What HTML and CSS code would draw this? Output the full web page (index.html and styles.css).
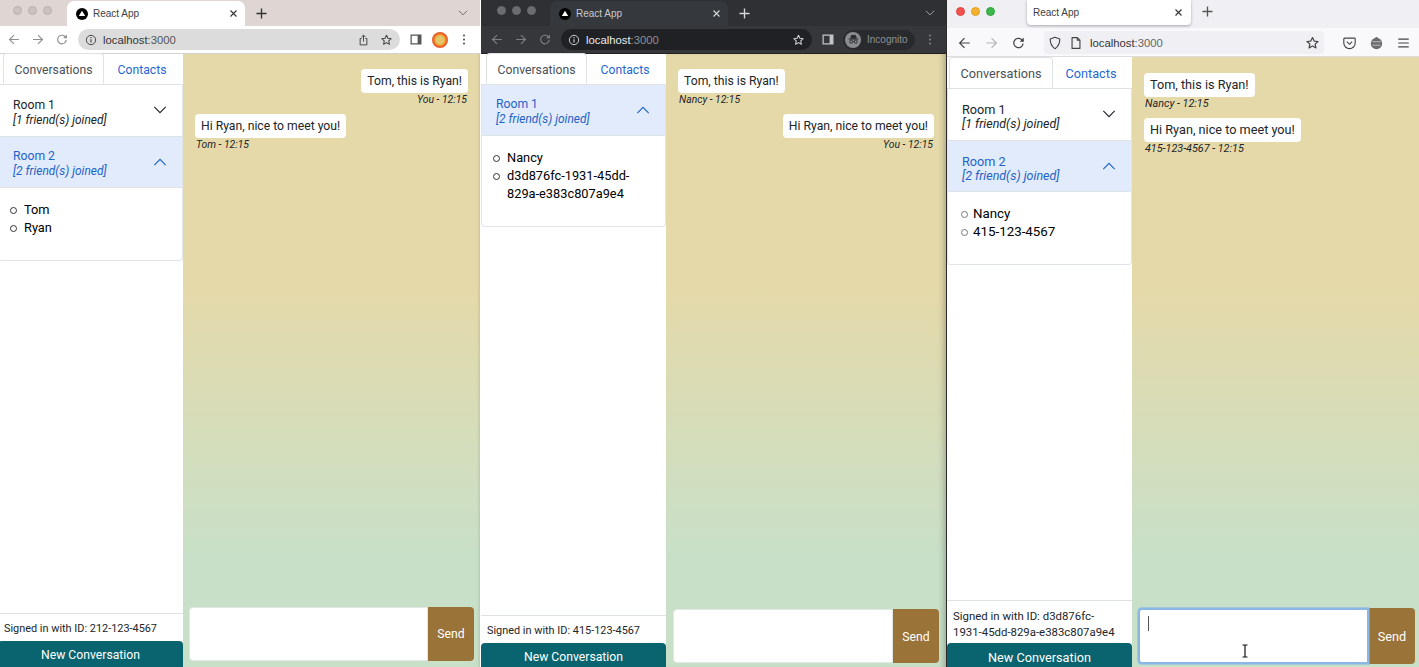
FILE: index.html
```html
<!DOCTYPE html>
<html lang="en">
<head>
<meta charset="UTF-8">
<title>React App - three browsers</title>
<link rel="stylesheet" href="styles.css">
</head>
<body>
<svg class="sprite" aria-hidden="true">
  <symbol id="i-back" viewBox="0 0 16 16"><path d="M14 8H2.500M8 2.500 2.500 8 8 13.500" fill="none" stroke="currentColor" stroke-width="1.400"/></symbol>
  <symbol id="i-forward" viewBox="0 0 16 16"><path d="M2 8h11.500M8 2.500 13.500 8 8 13.500" fill="none" stroke="currentColor" stroke-width="1.400"/></symbol>
  <symbol id="i-reload" viewBox="0 0 16 16"><path d="M13.200 8.500A5.300 5.300 0 1 1 11.600 4.200L13.500 6" fill="none" stroke="currentColor" stroke-width="1.400"/><path d="M14 1.800V6.500H9.300z" fill="currentColor"/></symbol>
  <symbol id="i-info" viewBox="0 0 16 16"><circle cx="8" cy="8" r="6.200" fill="none" stroke="currentColor" stroke-width="1.300"/><path d="M8 7v4.400" stroke="currentColor" stroke-width="1.500"/><circle cx="8" cy="4.900" r=".9" fill="currentColor"/></symbol>
  <symbol id="i-share" viewBox="0 0 16 16"><path d="M5.500 6H3.500v8.500h9V6h-2M8 10V1.800M5.300 4.200 8 1.500l2.700 2.700" fill="none" stroke="currentColor" stroke-width="1.300"/></symbol>
  <symbol id="i-star" viewBox="0 0 16 16"><path d="m8 1.800 1.900 4 4.400.5-3.300 3 .9 4.400L8 11.500l-3.900 2.200.9-4.400-3.300-3 4.400-.5z" fill="none" stroke="currentColor" stroke-width="1.400" stroke-linejoin="round"/></symbol>
  <symbol id="i-panel" viewBox="0 0 16 16"><path d="M2 2.500h12v11H2z" fill="none" stroke="currentColor" stroke-width="1.500"/><path d="M10 2.500h4v11h-4z" fill="currentColor"/></symbol>
  <symbol id="i-dots" viewBox="0 0 16 16"><circle cx="8" cy="3" r="1.300" fill="currentColor"/><circle cx="8" cy="8" r="1.300" fill="currentColor"/><circle cx="8" cy="13" r="1.300" fill="currentColor"/></symbol>
  <symbol id="i-down" viewBox="0 0 16 16"><path d="M1.500 4.500 8 11l6.500-6.500" fill="none" stroke="currentColor" stroke-width="1.300"/></symbol>
  <symbol id="i-up" viewBox="0 0 16 16"><path d="M1.500 11.500 8 5l6.500 6.500" fill="none" stroke="currentColor" stroke-width="1.300"/></symbol>
  <symbol id="i-close" viewBox="0 0 12 12"><path d="m2 2 8 8m0-8-8 8" fill="none" stroke="currentColor" stroke-width="1.500"/></symbol>
  <symbol id="i-plus" viewBox="0 0 12 12"><path d="M6 .5v11M.5 6h11" fill="none" stroke="currentColor" stroke-width="1.500"/></symbol>
  <symbol id="i-logo" viewBox="0 0 12 12"><circle cx="6" cy="6" r="6" fill="#000"/><path d="M6 2.800 9.200 8H2.800z" fill="#fff"/></symbol>
  <symbol id="i-shield" viewBox="0 0 16 16"><path d="M8 1.500 13.500 3.500c0 5-1.500 8.500-5.500 11-4-2.500-5.500-6-5.500-11z" fill="none" stroke="currentColor" stroke-width="1.300" stroke-linejoin="round"/></symbol>
  <symbol id="i-page" viewBox="0 0 16 16"><path d="M3.500 1.800h6l3 3v9.400h-9zM9.500 1.800v3h3" fill="none" stroke="currentColor" stroke-width="1.300" stroke-linejoin="round"/></symbol>
  <symbol id="i-pocket" viewBox="0 0 16 16"><path d="M2.500 2.500h11a1 1 0 0 1 1 1V8a6.500 6.500 0 0 1-13 0V3.500a1 1 0 0 1 1-1z" fill="none" stroke="currentColor" stroke-width="1.300"/><path d="M5 6.500 8 9.500l3-3" fill="none" stroke="currentColor" stroke-width="1.300"/></symbol>
  <symbol id="i-ext" viewBox="0 0 16 16"><circle cx="8" cy="8.500" r="6.500" fill="#6d6d70"/><path d="M3 6.500h10M3.500 10.500h9" stroke="#c4c4c6" stroke-width="1"/><circle cx="8" cy="2.500" r="1.500" fill="#6d6d70"/></symbol>
  <symbol id="i-menu" viewBox="0 0 16 16"><path d="M2 3.500h12M2 8h12M2 12.500h12" stroke="currentColor" stroke-width="1.300"/></symbol>
  <symbol id="i-incognito" viewBox="0 0 16 16"><path d="M2 7.500h12M4.500 7l1-4h5l1 4" fill="#2b2c2f" stroke="#2b2c2f" stroke-width="1.200"/><circle cx="5.200" cy="10.800" r="1.900" fill="none" stroke="#2b2c2f" stroke-width="1.100"/><circle cx="10.800" cy="10.800" r="1.900" fill="none" stroke="#2b2c2f" stroke-width="1.100"/><path d="M7 10.500h2" stroke="#2b2c2f"/></symbol>
  <symbol id="i-ibeam" viewBox="0 0 8 14"><path d="M1.500 1h5M1.500 13h5M4 1v12" fill="none" stroke="#111" stroke-width="1.200"/></symbol>
</svg>

<div class="desktop">

  <!-- regular chrome, Tom -->
  <section class="win win-first">
    <header class="browser">
      <div class="tabstrip">
        <div class="lights"><i></i><i></i><i></i></div>
        <div class="tab">
          <svg class="tab-logo"><use href="#i-logo"/></svg>
          <span class="tab-title">React App</span>
          <svg class="tab-x"><use href="#i-close"/></svg>
        </div>
        <svg class="tab-plus"><use href="#i-plus"/></svg>
        <svg class="tab-more"><use href="#i-down"/></svg>
      </div>
      <div class="toolbar">
        <svg class="tool dim"><use href="#i-back"/></svg>
        <svg class="tool dim"><use href="#i-forward"/></svg>
        <svg class="tool dim"><use href="#i-reload"/></svg>
        <div class="urlbar">
          <svg class="url-icon"><use href="#i-info"/></svg>
          <span class="url-text">localhost<span class="url-port">:3000</span></span>
          <svg class="url-btn url-push"><use href="#i-share"/></svg>
          <svg class="url-btn"><use href="#i-star"/></svg>
        </div>
        <svg class="tool"><use href="#i-panel"/></svg>
        <div class="tool avatar-wrap"><span class="avatar"></span></div>
        <svg class="tool"><use href="#i-dots"/></svg>
      </div>
    </header>
    <div class="app">
      <aside class="sidebar">
        <nav class="tabs">
          <a class="tabs-item active">Conversations</a>
          <a class="tabs-item">Contacts</a>
        </nav>
        <div class="rooms">
          <div class="room-head">
            <div><div class="room-name">Room 1</div><div class="room-sub">[1 friend(s) joined]</div></div>
            <svg class="room-chev"><use href="#i-down"/></svg>
          </div>
          <div class="room-head open">
            <div><div class="room-name">Room 2</div><div class="room-sub">[2 friend(s) joined]</div></div>
            <svg class="room-chev"><use href="#i-up"/></svg>
          </div>
          <div class="room-body">
            <ul><li>Tom</li><li>Ryan</li></ul>
          </div>
        </div>
        <div class="signed">Signed in with ID: 212-123-4567</div>
        <button class="new-btn">New Conversation</button>
      </aside>
      <main class="chat">
        <div class="messages">
          <div class="msg mine"><div class="bubble">Tom, this is Ryan!</div><div class="meta">You - 12:15</div></div>
          <div class="msg"><div class="bubble">Hi Ryan, nice to meet you!</div><div class="meta">Tom - 12:15</div></div>
        </div>
        <form class="send-form">
          <div class="send-input"></div>
          <button class="send-btn" type="button">Send</button>
        </form>
      </main>
    </div>
  </section>

  <!-- incognito chrome, Nancy -->
  <section class="win win-dark">
    <header class="browser">
      <div class="tabstrip">
        <div class="lights"><i></i><i></i><i></i></div>
        <div class="tab">
          <svg class="tab-logo"><use href="#i-logo"/></svg>
          <span class="tab-title">React App</span>
          <svg class="tab-x"><use href="#i-close"/></svg>
        </div>
        <svg class="tab-plus"><use href="#i-plus"/></svg>
        <svg class="tab-more"><use href="#i-down"/></svg>
      </div>
      <div class="toolbar">
        <svg class="tool dim"><use href="#i-back"/></svg>
        <svg class="tool dim"><use href="#i-forward"/></svg>
        <svg class="tool dim"><use href="#i-reload"/></svg>
        <div class="urlbar">
          <svg class="url-icon"><use href="#i-info"/></svg>
          <span class="url-text">localhost<span class="url-port">:3000</span></span>
          <svg class="url-btn url-push"><use href="#i-star"/></svg>
        </div>
        <svg class="tool"><use href="#i-panel"/></svg>
        <div class="incognito">
          <span class="incognito-face"><svg><use href="#i-incognito"/></svg></span>
          <span>Incognito</span>
        </div>
        <svg class="tool dim"><use href="#i-dots"/></svg>
      </div>
    </header>
    <div class="app">
      <aside class="sidebar">
        <nav class="tabs">
          <a class="tabs-item active">Conversations</a>
          <a class="tabs-item">Contacts</a>
        </nav>
        <div class="rooms">
          <div class="room-head open">
            <div><div class="room-name">Room 1</div><div class="room-sub">[2 friend(s) joined]</div></div>
            <svg class="room-chev"><use href="#i-up"/></svg>
          </div>
          <div class="room-body">
            <ul><li>Nancy</li><li>d3d876fc-1931-45dd-829a-e383c807a9e4</li></ul>
          </div>
        </div>
        <div class="signed">Signed in with ID: 415-123-4567</div>
        <button class="new-btn">New Conversation</button>
      </aside>
      <main class="chat">
        <div class="messages">
          <div class="msg"><div class="bubble">Tom, this is Ryan!</div><div class="meta">Nancy - 12:15</div></div>
          <div class="msg mine"><div class="bubble">Hi Ryan, nice to meet you!</div><div class="meta">You - 12:15</div></div>
        </div>
        <form class="send-form">
          <div class="send-input"></div>
          <button class="send-btn" type="button">Send</button>
        </form>
      </main>
    </div>
  </section>

  <!-- firefox, Ryan -->
  <section class="win win-fox">
    <header class="browser">
      <div class="tabstrip">
        <div class="lights"><i class="red"></i><i class="amber"></i><i class="green"></i></div>
        <div class="tab">
          <span class="tab-title">React App</span>
          <svg class="tab-x"><use href="#i-close"/></svg>
        </div>
        <svg class="tab-plus"><use href="#i-plus"/></svg>
      </div>
      <div class="toolbar">
        <svg class="tool"><use href="#i-back"/></svg>
        <svg class="tool dim"><use href="#i-forward"/></svg>
        <svg class="tool"><use href="#i-reload"/></svg>
        <div class="urlbar">
          <svg class="url-icon"><use href="#i-shield"/></svg>
          <svg class="url-icon"><use href="#i-page"/></svg>
          <span class="url-text">localhost<span class="url-port">:3000</span></span>
          <svg class="url-btn url-push"><use href="#i-star"/></svg>
        </div>
        <svg class="tool"><use href="#i-pocket"/></svg>
        <svg class="tool"><use href="#i-ext"/></svg>
        <svg class="tool"><use href="#i-menu"/></svg>
      </div>
    </header>
    <div class="app">
      <aside class="sidebar">
        <nav class="tabs">
          <a class="tabs-item active">Conversations</a>
          <a class="tabs-item">Contacts</a>
        </nav>
        <div class="rooms">
          <div class="room-head">
            <div><div class="room-name">Room 1</div><div class="room-sub">[1 friend(s) joined]</div></div>
            <svg class="room-chev"><use href="#i-down"/></svg>
          </div>
          <div class="room-head open">
            <div><div class="room-name">Room 2</div><div class="room-sub">[2 friend(s) joined]</div></div>
            <svg class="room-chev"><use href="#i-up"/></svg>
          </div>
          <div class="room-body">
            <ul><li>Nancy</li><li>415-123-4567</li></ul>
          </div>
        </div>
        <div class="signed">Signed in with ID: d3d876fc-1931-45dd-829a-e383c807a9e4</div>
        <button class="new-btn">New Conversation</button>
      </aside>
      <main class="chat">
        <div class="messages">
          <div class="msg"><div class="bubble">Tom, this is Ryan!</div><div class="meta">Nancy - 12:15</div></div>
          <div class="msg"><div class="bubble">Hi Ryan, nice to meet you!</div><div class="meta">415-123-4567 - 12:15</div></div>
        </div>
        <form class="send-form">
          <div class="send-input focus"><span class="caret"></span><svg class="ibeam"><use href="#i-ibeam"/></svg></div>
          <button class="send-btn" type="button">Send</button>
        </form>
      </main>
    </div>
  </section>

</div>
</body>
</html>
```

FILE: styles.css
```css
* { box-sizing: border-box; }

html, body {
  margin: 0;
  height: 100%;
  overflow: hidden;
  background: #fff;
  font-family: Roboto, "Liberation Sans", sans-serif;
  color: #212529;
}

.sprite { display: none; }

.desktop {
  display: flex;
  height: 667px;
}

/* windows */
.win {
  display: flex;
  flex-direction: column;
  height: 100%;
  overflow: hidden;
  font-size: 12.2px;
}
.win-first { width: 480px; }
.win-dark  { width: 465px; margin-left: 1px; }
.win-fox   { width: 473px; font-size: 12.7px; border-left: 1px solid #2b2b2b; }

/* browser frame */
.browser { flex: none; font-family: "Liberation Sans", sans-serif; }

.tabstrip {
  display: flex;
  align-items: flex-end;
  height: 26px;
  background: #dfd6d3;
}

.lights {
  display: flex;
  align-items: center;
  gap: 6px;
  width: 67px;
  height: 21px;
  padding-left: 13px;
  align-self: flex-start;
}
.lights i {
  width: 9px;
  height: 9px;
  border-radius: 50%;
  background: #c9c2bf;
  border: 1px solid #b9b2af;
}
.lights .red   { background: #f0524f; border-color: #e0443f; }
.lights .amber { background: #f5b02e; border-color: #e0a020; }
.lights .green { background: #3cb54a; border-color: #30a53e; }

.tab {
  display: flex;
  align-items: center;
  width: 178px;
  height: 25px;
  padding: 0 7px 0 9px;
  background: #fff;
  border-radius: 7px 7px 0 0;
  color: #3c4043;
}
.tab-logo { width: 12px; height: 12px; margin-right: 5px; flex: none; }
.tab-title { font-size: 10px; }
.tab-x { width: 9px; height: 9px; margin-left: auto; color: #333; }
.tab-plus { width: 11px; height: 11px; margin: 0 0 7px 11px; color: #333; }
.tab-more { width: 10px; height: 10px; margin: 0 12px 8px auto; color: #555; }

.toolbar {
  display: flex;
  align-items: center;
  height: 28px;
  padding: 0 4px 0 2px;
  background: #fff;
  border-bottom: 1px solid #d2d2d2;
  color: #555;
}
.tool {
  flex: none;
  width: 24px;
  height: 13px;
  color: #555;
}
.tool.dim { color: #8e8e8e; }

.urlbar {
  flex: 1;
  display: flex;
  align-items: center;
  height: 21px;
  margin: 0 4px;
  padding: 0 2px 0 6px;
  border-radius: 11px;
  background: #dcdcdc;
  color: #444;
}
.url-icon { flex: none; width: 14px; height: 12px; margin-right: 5px; }
.url-text { font-size: 11.3px; color: #333; }
.url-port { color: #555; }
.url-btn { flex: none; width: 23px; height: 12px; }
.url-push { margin-left: auto; }

.avatar-wrap {
  display: flex;
  justify-content: center;
  align-items: center;
  height: 16px;
}
.avatar {
  width: 16px;
  height: 16px;
  border-radius: 50%;
  background: radial-gradient(circle, #e3c66a 0 4px, #f0a030 5px, #e85a2c 7px);
}

/* incognito variant */
.win-dark .tabstrip { background: #2e3033; }
.win-dark .lights i { background: #6a6c6f; border-color: #6a6c6f; }
.win-dark .lights { gap: 6px; padding-left: 16px; width: 69px; }
.win-dark .tab { background: #35383c; color: #c8cacc; }
.win-dark .tab-x, .win-dark .tab-plus { color: #d4d6d8; }
.win-dark .tab-more { color: #bbb; margin-right: 11px; }
.win-dark .toolbar {
  padding-left: 4px;
  background: #35373a;
  border-bottom: 1px solid #222;
  color: #c4c6c8;
}
.win-dark .tool { color: #c4c6c8; }
.win-dark .tool.dim { color: #7d7f82; }
.win-dark .urlbar { background: #202124; color: #d0d2d4; }
.win-dark .url-text { color: #e8eaed; }
.win-dark .url-port { color: #8f9194; }

.incognito {
  flex: none;
  display: flex;
  align-items: center;
  gap: 6px;
  width: 72px;
  height: 20px;
  margin: 0 3px;
  padding-left: 2px;
  border-radius: 10px;
  background: #292a2d;
  font-size: 10px;
  color: #8f9194;
}
.incognito-face {
  display: flex;
  align-items: center;
  justify-content: center;
  width: 16px;
  height: 16px;
  border-radius: 50%;
  background: #8a8c8f;
}
.incognito-face svg { width: 13px; height: 13px; }

/* firefox variant */
.win-fox .tabstrip { height: 28px; background: #f0f0f4; }
.win-fox .lights { width: 80px; gap: 6px; padding-left: 9px; height: 22px; }
.win-fox .tab {
  align-self: flex-start;
  width: 164px;
  height: 25px;
  padding: 0 8px 0 6px;
  border-radius: 0 0 4px 4px;
  box-shadow: 0 1px 3px rgba(0, 0, 0, .3);
}
.win-fox .tab-plus { margin: 0 0 11px 11px; color: #555; }
.win-fox .toolbar {
  height: 29px;
  padding: 1px 2px 0 4px;
  background: #f9f9fb;
  border-bottom: 1px solid #ddd;
}
.win-fox .tool { width: 27px; height: 14px; color: #444; }
.win-fox .tool.dim { color: #b5b5b8; }
.win-fox .urlbar {
  height: 23px;
  margin: 0 12px;
  padding: 0 0 0 4px;
  border-radius: 4px;
  background: #f0f0f4;
}
.win-fox .url-icon { width: 14px; height: 14px; margin-right: 7px; }
.win-fox .url-port { color: #666; }
.win-fox .url-btn { height: 14px; }

/* the app inside each window */
.app {
  flex: 1;
  min-height: 0;
  display: flex;
}

.sidebar {
  flex: none;
  display: flex;
  flex-direction: column;
  width: 185px;
  background: #fff;
}
.win-first .sidebar { margin-left: -2px; }

.tabs {
  display: flex;
  align-items: flex-end;
  flex: none;
  height: 31px;
  padding-left: 5px;
  border-bottom: 1px solid #dee2e6;
}
.tabs-item {
  display: flex;
  align-items: center;
  justify-content: center;
  height: 31px;
  padding-top: 2px;
  color: #1f68d2;
}
.tabs-item.active {
  width: 101px;
  color: #495057;
  background: #fff;
  border: 1px solid #dee2e6;
  border-bottom-color: #fff;
  border-radius: 4px 4px 0 0;
}
.tabs-item:last-child { width: 76px; }
.win-fox .tabs { height: 32px; padding-left: 2px; }
.win-fox .tabs-item.active { width: 104px; }

.rooms {
  flex: none;
  border: 1px solid #e1e4e8;
  border-top: 0;
  border-radius: 0 0 4px 4px;
}
.room-head {
  display: flex;
  align-items: center;
  justify-content: space-between;
  height: 52px;
  padding: 0 15px 0 14px;
  border-bottom: 1px solid #dfe2e6;
  color: #212529;
}
.room-head.open {
  height: 51px;
  background: #e1ebfb;
  color: #1f63c8;
}
.room-name { line-height: 15px; margin-top: 3px; }
.win-fox .room-name { margin-top: 4px; }
.room-sub { font-size: .98em; font-style: italic; line-height: 14px; }
.room-chev { width: 14px; height: 14px; margin-top: -1px; }

.room-body { padding: 13px 15px 23px 0; color: #000; }
.room-body ul {
  margin: 0;
  padding-left: 11px;
  list-style: none;
}
.win-fox .room-body ul { padding-left: 13px; }
.room-body li { display: flex; font-size: 1.05em; line-height: 18px; }
.room-body li::before {
  content: "";
  flex: none;
  width: 5px;
  height: 5px;
  margin: 6px 7px 0 0;
  border: 1px solid #333;
  border-radius: 50%;
}
.win-fox .room-body li::before { margin-right: 5px; border-color: #777; }

.signed {
  flex: none;
  margin-top: auto;
  padding: 7px 6px 4px;
  border-top: 1px solid #dee2e6;
  font-size: 10.9px;
  line-height: 16px;
  color: #212529;
}
.win-fox .signed { padding: 7px 12px 3px 6px; font-size: 11.4px; }

.new-btn {
  flex: none;
  height: 26px;
  padding: 1px 0 0;
  border: 0;
  border-radius: 4px 4px 0 0;
  background: #0a6470;
  color: #fff;
  font: inherit;
}
/* the window edge cuts these two off */
.win-dark .new-btn, .win-fox .new-btn { height: 28px; margin-bottom: -4px; padding: 0; }

/* chat column */
.chat {
  flex: 1;
  min-width: 0;
  display: flex;
  flex-direction: column;
  background: linear-gradient(to bottom, #e5d9a9 0, #e5d9a9 38%, #c8e0c8 82%);
}
.win-first .chat { box-shadow: inset -3px 0 3px -2px rgba(0, 0, 0, .12); }
.win-dark .chat { box-shadow: inset -6px 0 6px -4px rgba(0, 0, 0, .25); }

.messages {
  flex: 1;
  min-height: 0;
  display: flex;
  flex-direction: column;
  gap: 8px;
  padding: 15px 12px;
}
.win-fox .messages { padding-top: 16px; }
.msg {
  display: flex;
  flex-direction: column;
  align-items: flex-start;
}
.msg.mine { align-items: flex-end; }
.bubble {
  padding: 0 6px;
  line-height: 24px;
  background: #fff;
  border-radius: 4px;
  color: #212529;
}
.meta {
  padding: 0 1px;
  font-size: .85em;
  font-style: italic;
  line-height: 13px;
}

.send-form {
  flex: none;
  display: flex;
  height: 54px;
  margin: 0 6px 6px;
}
.win-dark .send-form { margin: 0 7px 4px; }
.win-fox .send-form { height: 56px; margin: 0 4px 3px 6px; }
.send-input {
  position: relative;
  flex: 1;
  background: #fff;
  border: 1px solid #e3e6e3;
  border-radius: 4px 0 0 4px;
}
.send-input.focus {
  border: 2px solid #8ab8e6;
  box-shadow: 0 0 0 1px rgba(138, 184, 230, .6);
}
.caret {
  position: absolute;
  left: 8px;
  top: 6px;
  width: 1px;
  height: 15px;
  background: #555;
}
.ibeam {
  position: absolute;
  left: 101px;
  top: 34px;
  width: 8px;
  height: 14px;
}
.send-btn {
  flex: none;
  width: 46px;
  padding: 0;
  border: 0;
  border-radius: 0 4px 4px 0;
  background: #9a7339;
  color: #fff;
  font: inherit;
}
.win-dark .send-btn { padding-top: 2px; }
.win-fox .send-btn { padding-top: 1px; }
```
